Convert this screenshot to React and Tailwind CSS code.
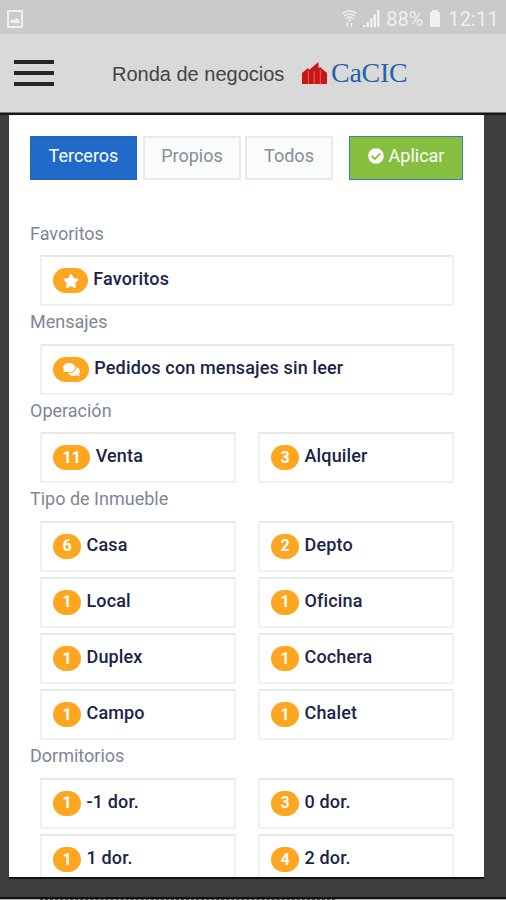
import React from "react";
import { FaCheckCircle, FaComments, FaStar } from "react-icons/fa";

const sections = [
  { title: "Favoritos", wide: true, items: [{ icon: FaStar, label: "Favoritos" }] },
  { title: "Mensajes", wide: true, items: [{ icon: FaComments, label: "Pedidos con mensajes sin leer" }] },
  { title: "Operación", items: [{ count: 11, label: "Venta" }, { count: 3, label: "Alquiler" }] },
  {
    title: "Tipo de Inmueble",
    items: [
      { count: 6, label: "Casa" },
      { count: 2, label: "Depto" },
      { count: 1, label: "Local" },
      { count: 1, label: "Oficina" },
      { count: 1, label: "Duplex" },
      { count: 1, label: "Cochera" },
      { count: 1, label: "Campo" },
      { count: 1, label: "Chalet" },
    ],
  },
  {
    title: "Dormitorios",
    items: [
      { count: 1, label: "-1 dor." },
      { count: 3, label: "0 dor." },
      { count: 1, label: "1 dor." },
      { count: 4, label: "2 dor." },
    ],
  },
];

function StatusBar() {
  return (
    <div className="h-[34px] bg-[#cacaca] flex items-center pl-[7px] pr-[7px] pt-[3px] text-[#f0f0f0]">
      <svg width="16" height="18" viewBox="0 0 16 18">
        <rect x="1" y="1" width="14" height="16" rx="1.500" fill="#cacaca" stroke="currentColor" strokeWidth="2.200" />
        <path d="M3.500 13V10.500l2-1.500 1.500 1 2.500-2 3 2.500V13z" fill="currentColor" />
      </svg>
      <svg className="ml-auto" width="15" height="17" viewBox="0 0 15 17" fill="none" stroke="currentColor" strokeWidth="1.5">
        <path d="M.5 3.500C4.500 0 10.500 0 14.500 3.500M2 6c3.500-2.600 7.500-2.600 11 0M4 8.500c2-1.600 5-1.600 7 0" />
        <path d="M5.500 9.500h4l-2 2.500z" fill="currentColor" stroke="none" />
        <path d="M5.300 13v3.500M9.500 13v3.500" />
      </svg>
      <svg className="ml-[6px]" width="18" height="17" viewBox="0 0 18 17" fill="currentColor">
        <path d="M0 15h2.500v2H0zM3.500 12H6v5H3.500zM7 8.500h2.500V17H7zM10.500 4.500H13V17h-2.500zM14 0h2.500v17H14z" />
      </svg>
      <span className="ml-[5px] w-[39px] text-[20px] leading-none whitespace-nowrap">88%</span>
      <svg className="ml-[4px]" width="12" height="17" viewBox="0 0 12 17" fill="currentColor">
        <path d="M3 0h6v2h2v15H1V2h2z" />
      </svg>
      <span className="ml-[7px] text-[20px] leading-none tracking-[0.2px]">12:11</span>
    </div>
  );
}

function Header() {
  return (
    <header className="h-[78px] bg-[#d9d9d9] flex items-center pl-[14px]">
      <button className="w-[40px] flex flex-col gap-[7px]">
        <span className="h-[4px] w-full bg-[#262626]" />
        <span className="h-[4px] w-full bg-[#262626]" />
        <span className="h-[4px] w-full bg-[#262626]" />
      </button>
      <h1 className="ml-[58px] w-[174px] mt-[1px] text-[20px] leading-none whitespace-nowrap text-[#444] font-['Liberation_Sans',Arial,sans-serif]">
        Ronda de negocios
      </h1>
      <svg className="ml-[16px] mt-[-1px]" width="25" height="22" viewBox="0 0 25 22">
        <path d="M0 11l6-5 1 2L16.500 0v6.500L18 5l7 6v11H0z" fill="#cb1517" />
        <path d="M6.300 9v13M12.200 9v13M18.300 8v14" stroke="#e8a5a0" strokeWidth=".6" />
      </svg>
      <span className="ml-[4px] text-[28px] leading-none tracking-[-0.3px] text-[#2860ac] font-['Liberation_Serif',serif]">CaCIC</span>
    </header>
  );
}

function FilterItem({ item }) {
  const Icon = item.icon;
  return (
    <div className="h-[51px] border-2 border-[#f0f0f0] border-t-[#e8e8e8] bg-white flex pl-[11px] pt-[10px]">
      <span className="h-[25px] mt-[1px] px-[9.5px] rounded-full bg-[#ffa620] text-white text-[16px] leading-[26px] font-bold flex items-center">
        {Icon ? <Icon size={item.label === "Favoritos" ? 16 : 17} /> : item.count}
      </span>
      <span className="ml-[5.3px] text-[18px] leading-[24px] font-medium tracking-[0.15px] text-[#1b2449] whitespace-nowrap">
        {item.label}
      </span>
    </div>
  );
}

export default function App() {
  return (
    <div className="w-[506px] h-[900px] overflow-hidden bg-[#3d3d3d] flex flex-col font-[Roboto,sans-serif]">
      <StatusBar />
      <Header />
      <div className="h-[1px] shrink-0 bg-[#777]" />
      <div className="h-[2px] shrink-0 bg-[#171717]" />
      <main className="h-[762px] shrink-0 ml-[9px] w-[475px] bg-white overflow-hidden px-[21px] pt-[21px]">
        <div className="flex h-[44px] text-[18px] text-center text-[#868e99]">
          <button className="w-[107px] pb-[5px] bg-[#206bc9] text-white border border-[#2464b5]">Terceros</button>
          <button className="ml-[6px] w-[98px] pb-[5px] bg-[#fafbfb] border-2 border-[#e8ebeb]">Propios</button>
          <button className="ml-[4px] w-[88px] pb-[5px] bg-[#fafbfb] border-2 border-[#e8ebeb]">Todos</button>
          <button className="ml-[16px] w-[114px] pb-[5px] bg-[#86bf40] text-white border border-[#3686a5] flex items-center justify-center gap-[5px]">
            <FaCheckCircle size={16} />
            <span>Aplicar</span>
          </button>
        </div>
        <div className="pt-[38px]">
          {sections.map((section) => (
            <section key={section.title} className="mb-[0.6px]">
              <h2 className="h-[37px] pt-[3.5px] text-[18px] leading-[24px] text-[#7d8794]">{section.title}</h2>
              <div className={section.wide ? "ml-[10px] w-[414px]" : "ml-[10px] w-[414px] grid grid-cols-2 gap-x-[22px] gap-y-[5.2px]"}>
                {section.items.map((item) => (
                  <FilterItem key={item.label} item={item} />
                ))}
              </div>
            </section>
          ))}
        </div>
      </main>
      <div className="h-[2px] shrink-0 ml-[9px] w-[475px] bg-[#111]" />
      <div className="h-[18px] shrink-0" />
      <div className="h-[2px] shrink-0 bg-[#111]" />
      {/* sliver of the page behind the filter panel */}
      <div className="h-[1px] shrink-0 bg-[#b5b2b2] pl-[40px]">
        <div className="h-full w-[295px] border-t border-dashed border-[#444]" />
      </div>
    </div>
  );
}
